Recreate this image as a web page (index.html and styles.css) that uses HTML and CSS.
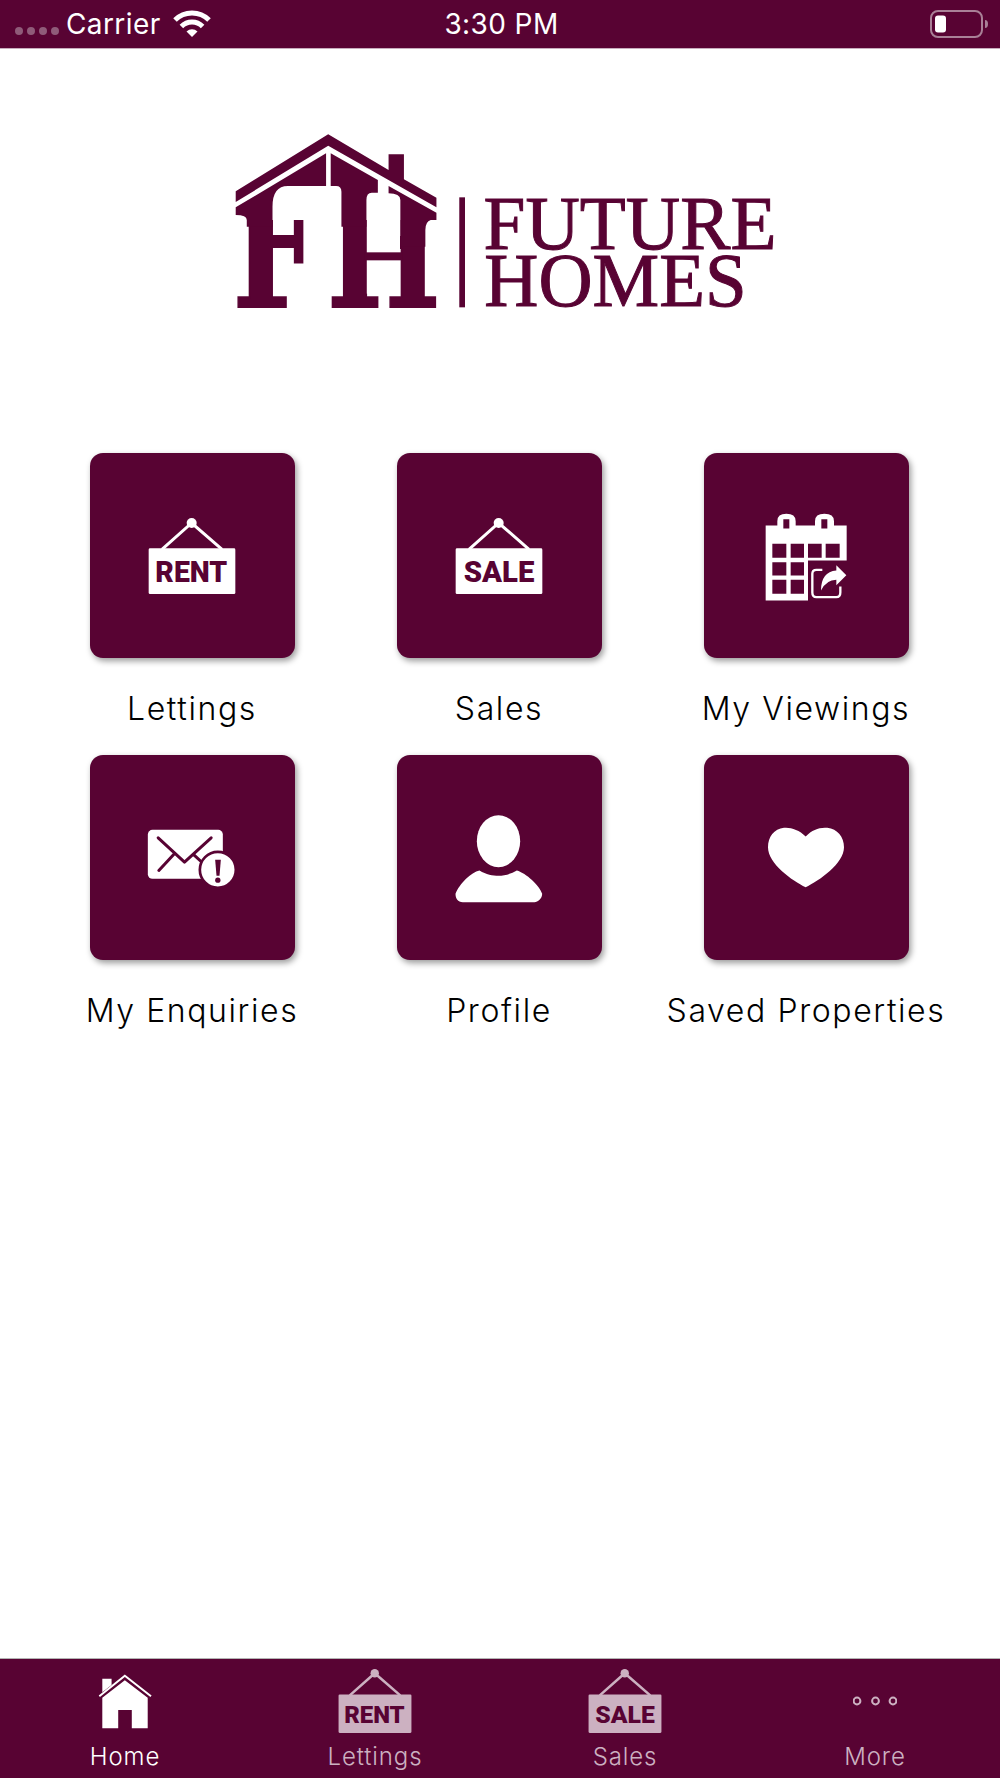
FILE: index.html
```html
<!DOCTYPE html>
<html lang="en">
<head>
<meta charset="utf-8">
<title>Future Homes</title>
<link rel="stylesheet" href="styles.css">
</head>
<body>
<div class="app">
  <header class="status">
    <div class="status-left">
      <span class="signal"><i></i><i></i><i></i><i></i></span>
      <span class="carrier">Carrier</span>
      <svg class="wifi" viewBox="0 0 38 28" width="38" height="28">
        <path class="wifi-arc" d="M2 11A24 24 0 0 1 36 11"/>
        <path class="wifi-arc" d="M8.4 17.4A15 15 0 0 1 29.6 17.4"/>
        <path class="wifi-dot" d="M19 28L13.5 22.5A8 8 0 0 1 24.5 22.5Z"/>
      </svg>
    </div>
    <div class="clock">3:30 PM</div>
    <div class="status-right">
      <svg class="battery" viewBox="0 0 58 28" width="58" height="28">
        <rect class="battery-case" x="1" y="1" width="51" height="26" rx="7"/>
        <rect class="battery-level" x="5" y="5.5" width="11" height="17" rx="3"/>
        <path class="battery-nub" d="M55 10a3 4 0 0 1 0 8z"/>
      </svg>
    </div>
  </header>

  <main class="home">
    <svg class="logo" viewBox="0 0 1568 600" width="560" height="200" preserveAspectRatio="none">
      <defs>
        <clipPath id="stem-clip"><rect x="0" y="300" width="700" height="300"/></clipPath>
      </defs>
      <g clip-path="url(#stem-clip)">
        <text class="mono" transform="translate(35 561) scale(.68 1)">F</text>
        <text class="mono" transform="translate(299 561) scale(.68 1)">H</text>
      </g>
      <!-- thin, low crossbar for the H -->
      <rect class="logo-gap" x="411" y="240" width="93" height="281"/>
      <rect class="logo-fill" x="405" y="397" width="105" height="24"/>
      <path class="logo-fill" d="M44 214L303 43L472 150V103H515V178L606 233V262L303 77L44 246Z"/>
      <path class="logo-fill" d="M44 262L297 100V198H190Q147 198 147 260V320H75V300Q75 285 44 285Z"/>
      <path class="logo-fill" d="M310 100L442 180V218H425Q410 218 410 240V320H340V215Q340 198 325 198H310Z"/>
      <path class="logo-fill" d="M472 198L606 278V300H590Q575 305 575 330V380H505V240Q505 220 472 220Z"/>
      <rect class="logo-fill" x="670" y="232" width="16" height="330"/>
      <text class="wordmark" x="738" y="388" textLength="820" lengthAdjust="spacingAndGlyphs">FUTURE</text>
      <text class="wordmark" x="740" y="558" textLength="735" lengthAdjust="spacingAndGlyphs">HOMES</text>
    </svg>

    <nav class="menu">
      <a class="menu-item">
        <span class="tile">
          <svg class="sign" viewBox="0 0 264 228" width="88" height="76">
            <path class="sign-cord" d="M42 94L131 15L222 94"/>
            <circle class="sign-face" cx="131" cy="15" r="15"/>
            <rect class="sign-face" x="2" y="91" width="260" height="137" rx="4"/>
            <text class="sign-text" x="130" y="193" text-anchor="middle" textLength="216" lengthAdjust="spacingAndGlyphs">RENT</text>
          </svg>
        </span>
        <span class="menu-label">Lettings</span>
      </a>
      <a class="menu-item">
        <span class="tile">
          <svg class="sign" viewBox="0 0 264 228" width="88" height="76">
            <path class="sign-cord" d="M42 94L131 15L222 94"/>
            <circle class="sign-face" cx="131" cy="15" r="15"/>
            <rect class="sign-face" x="2" y="91" width="260" height="137" rx="4"/>
            <text class="sign-text" x="132" y="193" text-anchor="middle" textLength="212" lengthAdjust="spacingAndGlyphs">SALE</text>
          </svg>
        </span>
        <span class="menu-label">Sales</span>
      </a>
      <a class="menu-item">
        <span class="tile">
          <svg class="glyph" viewBox="-9 1.5 420 390" width="140" height="130">
            <path class="sign-face" d="M80 105H115V92Q115 70 142 70Q170 70 170 92V105H228V92Q228 70 256 70Q285 70 285 92V105H323V210H207V330H80Z"/>
            <path class="glyph-cut" d="M133 86h18v28h-18zM247 86h18v28h-18z"/>
            <path class="glyph-cut" d="M100 160h42v42h-42zM155 160h40v42h-40zM207 160h41v42h-41zM260 160h42v42h-42zM100 215h42v40h-42zM155 215h40v40h-40zM100 268h42v42h-42zM155 268h40v42h-40z"/>
            <path class="share-box" d="M250 238H232Q220 238 220 250V306Q220 320 232 320H292Q304 320 304 306V288"/>
            <path class="sign-face" d="M292 224L322 254L292 284V268Q262 268 246 300Q246 244 292 240Z"/>
          </svg>
        </span>
        <span class="menu-label">My Viewings</span>
      </a>
      <a class="menu-item">
        <span class="tile">
          <svg class="glyph" viewBox="-22.5 -22.5 420 390" width="140" height="130">
            <rect class="sign-face" x="55" y="88" width="225" height="147" rx="14"/>
            <path class="envelope-fold" d="M86 112L165 185L245 112M88 210L136 158M194 164L218 186"/>
            <circle class="alert-ring" cx="265" cy="208" r="54"/>
            <path class="glyph-cut" d="M257 178H274L270 226H261Z"/>
            <circle class="glyph-cut" cx="265" cy="239" r="8"/>
          </svg>
        </span>
        <span class="menu-label">My Enquiries</span>
      </a>
      <a class="menu-item">
        <span class="tile">
          <svg class="glyph" viewBox="-1.5 -22.5 420 390" width="140" height="130">
            <ellipse class="sign-face" cx="207" cy="122" rx="65" ry="78"/>
            <path class="sign-face" d="M78 280C90 250 125 215 150 210C170 222 190 226 207 226C225 226 245 220 262 210C290 218 330 255 338 280C338 295 325 305 315 305H100C85 305 78 295 78 280Z"/>
          </svg>
        </span>
        <span class="menu-label">Profile</span>
      </a>
      <a class="menu-item">
        <span class="tile">
          <svg class="glyph" viewBox="921 -22.5 420 390" width="140" height="130">
            <path class="sign-face" d="M1130 108C1110 88 1085 80 1065 82C1035 85 1017 110 1017 140C1017 190 1090 240 1130 260C1170 240 1245 190 1245 140C1245 110 1225 85 1195 82C1170 80 1150 88 1130 108Z"/>
          </svg>
        </span>
        <span class="menu-label">Saved Properties</span>
      </a>
    </nav>
  </main>

  <footer class="tabs">
    <a class="tab tab-active">
      <span class="tab-icon">
        <svg viewBox="290 70 170 172" width="57" height="57">
          <path class="home-body" d="M305 145L373 92L442 145V237H394V182H353V237H305Z"/>
          <path class="home-roof" d="M296 140L373 78L452 140"/>
          <path class="home-body" d="M305 87H333V106L305 128Z"/>
        </svg>
      </span>
      <span class="tab-label">Home</span>
    </a>
    <a class="tab">
      <span class="tab-icon">
        <svg class="sign" viewBox="0 0 264 228" width="74" height="64">
          <path class="sign-cord" d="M42 94L131 15L222 94"/>
          <circle class="sign-face" cx="131" cy="15" r="15"/>
          <rect class="sign-face" x="2" y="91" width="260" height="137" rx="4"/>
          <text class="sign-text" x="130" y="193" text-anchor="middle" textLength="216" lengthAdjust="spacingAndGlyphs">RENT</text>
        </svg>
      </span>
      <span class="tab-label">Lettings</span>
    </a>
    <a class="tab">
      <span class="tab-icon">
        <svg class="sign" viewBox="0 0 264 228" width="74" height="64">
          <path class="sign-cord" d="M42 94L131 15L222 94"/>
          <circle class="sign-face" cx="131" cy="15" r="15"/>
          <rect class="sign-face" x="2" y="91" width="260" height="137" rx="4"/>
          <text class="sign-text" x="132" y="193" text-anchor="middle" textLength="212" lengthAdjust="spacingAndGlyphs">SALE</text>
        </svg>
      </span>
      <span class="tab-label">Sales</span>
    </a>
    <a class="tab">
      <span class="tab-icon">
        <svg viewBox="0 0 44 12" width="44" height="12">
          <circle class="more-dot" cx="4" cy="6" r="3.4"/>
          <circle class="more-dot" cx="22.5" cy="6" r="3.4"/>
          <circle class="more-dot" cx="40" cy="6" r="3.4"/>
        </svg>
      </span>
      <span class="tab-label">More</span>
    </a>
  </footer>
</div>
</body>
</html>
```

FILE: styles.css
```css
:root {
  --brand: #580333;
  --muted: #ccb1c1;
}

* { box-sizing: border-box; }

body {
  margin: 0;
  background: #fff;
  font-family: "Inter", "Liberation Sans", sans-serif;
  color: #000;
}

.app {
  display: flex;
  flex-direction: column;
  height: 1778px;
}

/* status bar */
.status {
  display: grid;
  grid-template-columns: 1fr auto 1fr;
  align-items: center;
  height: 49px;
  padding: 0 12px 1px 15px;
  background: var(--brand);
  border-bottom: 1px solid #c8adbe;
  color: #fff;
  font-family: "Inter", "Liberation Sans", sans-serif;
  font-size: 28px;
  letter-spacing: .4px;
}

.status-left { display: flex; align-items: center; }

.signal { display: flex; gap: 4px; margin: 14px 7px 0 0; }
.signal i {
  width: 8px;
  height: 8px;
  border-radius: 4px;
  background: #8f5b79;
}

.carrier { width: 107px; }

.wifi { margin-top: -1px; }
.wifi-arc { fill: none; stroke: #fff; stroke-width: 5; }
.wifi-dot { fill: #fff; }

.status-right { display: flex; justify-content: flex-end; }
.battery-case { fill: none; stroke: #a98097; stroke-width: 2; }
.battery-level { fill: #fff; }
.battery-nub { fill: #a98097; }

/* landing page */
.home {
  flex: 1;
  display: flex;
  flex-direction: column;
  align-items: center;
  padding-top: 71px;
}

.logo { display: block; }
.logo-fill { fill: var(--brand); }
.logo-gap { fill: #fff; }
.mono {
  fill: var(--brand);
  stroke: var(--brand);
  stroke-width: 6;
  font-family: "DejaVu Serif", "Liberation Serif", serif;
  font-weight: 700;
  font-size: 497px;
}
.wordmark {
  fill: var(--brand);
  stroke: var(--brand);
  stroke-width: 3;
  font-family: "Liberation Serif", serif;
  font-size: 227px;
}

.menu {
  display: grid;
  grid-template-columns: repeat(3, 307px);
  row-gap: 26px;
  margin: 133px 2px 0 0;
}

.menu-item {
  display: flex;
  flex-direction: column;
  align-items: center;
}

.tile {
  display: flex;
  align-items: center;
  justify-content: center;
  width: 205px;
  height: 205px;
  border-radius: 13px;
  background: var(--brand);
  box-shadow: 2px 3px 6px rgba(0, 0, 0, .4);
}

.menu-label {
  margin-top: 31px;
  font-size: 32px;
  line-height: 40px;
  font-weight: 300;
  letter-spacing: 1.6px;
  white-space: nowrap;
}

/* icon parts, shared by tiles and tabs */
.sign-face { fill: #fff; }
.sign-cord { fill: none; stroke: #fff; stroke-width: 9; }
.sign-text {
  fill: var(--brand);
  font-family: "Roboto", "Liberation Sans", sans-serif;
  font-weight: 900;
  font-size: 88px;
}
.glyph-cut { fill: var(--brand); }
.share-box { fill: none; stroke: #fff; stroke-width: 7; }
.envelope-fold { fill: none; stroke: var(--brand); stroke-width: 9; stroke-linecap: round; stroke-linejoin: round; }
.alert-ring { fill: #fff; stroke: var(--brand); stroke-width: 8; }

/* tab bar */
.tabs {
  display: grid;
  grid-template-columns: repeat(4, 1fr);
  height: 120px;
  background: var(--brand);
  border-top: 1px solid #b3b3b3;
}

.tab {
  display: flex;
  flex-direction: column;
  align-items: center;
  padding-top: 6px;
  color: var(--muted);
}
.tab-active { color: #fff; }

.tab-icon {
  display: flex;
  align-items: center;
  justify-content: center;
  height: 72px;
}

.tab-label {
  font-size: 24px;
  line-height: 28px;
  margin-top: 6px;
  font-weight: 300;
  letter-spacing: .9px;
}

.home-body { fill: #fff; }
.home-roof { fill: none; stroke: #fff; stroke-width: 6; }

.tab .sign-face { fill: var(--muted); }
.tab .sign-cord { stroke: var(--muted); }
.more-dot { fill: none; stroke: var(--muted); stroke-width: 2; }
```
